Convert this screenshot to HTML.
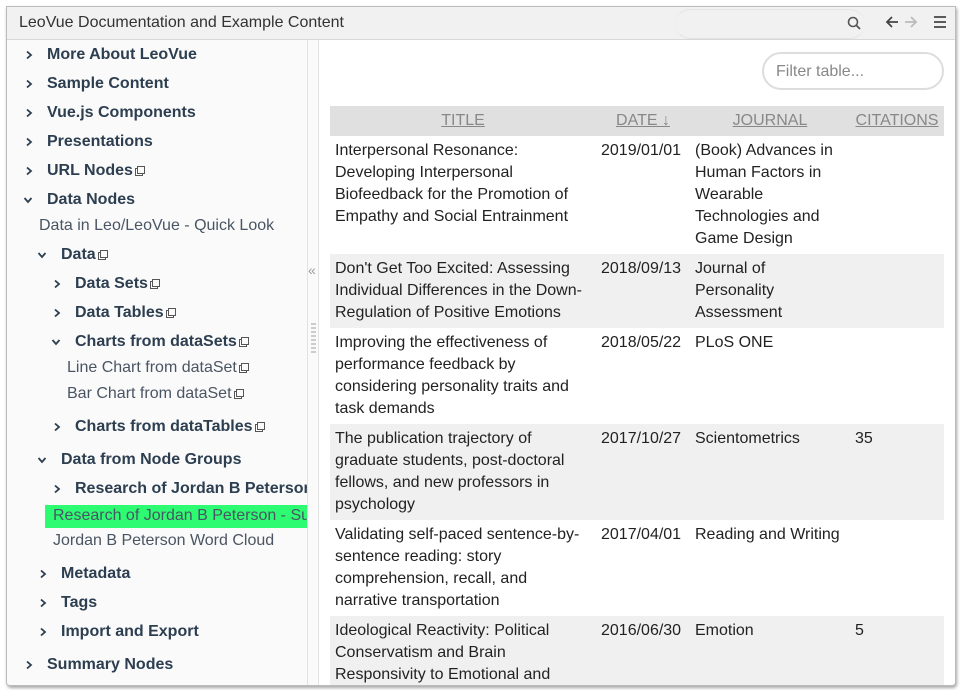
<!DOCTYPE html>
<html><head><meta charset="utf-8"><style>
*{box-sizing:border-box;margin:0;padding:0}
body{width:961px;height:690px;background:#fff;font-family:"Liberation Sans",sans-serif;color:#2c3e50;position:relative;overflow:hidden}
.win{position:absolute;left:6px;top:6px;width:950px;height:680px;border:1px solid #bbb;box-shadow:1px 2px 3px rgba(0,0,0,.35);border-radius:0 0 4px 4px;overflow:hidden;background:#fff}
.top{position:absolute;left:0;top:0;width:100%;height:33px;background:#f1f1f1;border-bottom:1px solid #d8d8d8}
.top .t{position:absolute;left:12px;top:7px;font-size:16px;color:#333}
.srch{position:absolute;left:668px;top:2px;width:190px;height:30px;border:1px solid #e4e4e4;border-radius:15px;border-right:none;border-left:1px solid #eee}
.side{position:absolute;left:0;top:33px;width:300px;height:647px;background:#fafafa}
.sep{position:absolute;left:300px;top:33px;width:12px;height:647px;border-left:1px solid #e2e2e2;border-right:1px solid #e2e2e2;background:#fafafa}
.n{position:absolute;font-size:16px;white-space:nowrap;color:#2c3e50}
.b{font-weight:bold}
.l{color:#4a5563}
.cr,.cd{position:absolute}
.ic{display:inline-block;width:8px;height:8px;border:1px solid #555;margin-left:4px;position:relative;top:-1px;box-shadow:-2px 2px 0 -1px #fff,-2px 2px 0 0 #555}
.main{position:absolute;left:312px;top:33px;width:638px;height:647px;background:#fff}
.filter{position:absolute;left:443px;top:12px;width:182px;height:38px;border:2px solid #ddd;border-radius:19px;font-size:16px;color:#888;padding:9px 12px}
table{position:absolute;left:11px;top:66px;width:614px;border-collapse:collapse;font-size:16px;color:#222}
th{background:#e0e0e0;color:#888;font-weight:normal;text-decoration:underline;height:30px;text-align:center;font-size:16px}
td{vertical-align:top;padding:4px 6px 4px 5px;line-height:22px}
tr.g td{background:#f0f0f0}
</style></head><body>
<svg width="0" height="0" style="position:absolute"><defs>
<symbol id="r" viewBox="0 0 8 10"><path d="M2 1.5L6 5L2 8.5" stroke="#2c3e50" stroke-width="1.8" fill="none"/></symbol>
<symbol id="d" viewBox="0 0 10 8"><path d="M1.5 2L5 6L8.5 2" stroke="#2c3e50" stroke-width="1.8" fill="none"/></symbol>
</defs></svg>
<div class="win">
<div class="top"><span class="t">LeoVue Documentation and Example Content</span><div class="srch"></div>
<svg style="position:absolute;left:840px;top:9px" width="14" height="14"><circle cx="6" cy="6" r="4.5" stroke="#555" stroke-width="1.6" fill="none"/><line x1="9.5" y1="9.5" x2="13" y2="13" stroke="#555" stroke-width="1.8"/></svg>
<svg style="position:absolute;left:878px;top:8px" width="40" height="16"><path d="M2 7H13M7 2L2 7L7 12" stroke="#444" stroke-width="1.8" fill="none"/><path d="M20 7H31M26 2L31 7L26 12" stroke="#bbb" stroke-width="1.8" fill="none"/></svg>
<svg style="position:absolute;left:926px;top:8px" width="14" height="14"><path d="M1 2H13M1 7H13M1 12H13" stroke="#444" stroke-width="1.8"/></svg>
</div>
<div class="side">
<svg class="cr" style="left:18px;top:10px" width="8" height="10"><use href="#r"/></svg><span class="n b" style="left:40px;top:6px">More About LeoVue</span>
<svg class="cr" style="left:18px;top:39px" width="8" height="10"><use href="#r"/></svg><span class="n b" style="left:40px;top:35px">Sample Content</span>
<svg class="cr" style="left:18px;top:68px" width="8" height="10"><use href="#r"/></svg><span class="n b" style="left:40px;top:64px">Vue.js Components</span>
<svg class="cr" style="left:18px;top:97px" width="8" height="10"><use href="#r"/></svg><span class="n b" style="left:40px;top:93px">Presentations</span>
<svg class="cr" style="left:18px;top:126px" width="8" height="10"><use href="#r"/></svg><span class="n b" style="left:40px;top:122px">URL Nodes<i class="ic"></i></span>
<svg class="cd" style="left:16px;top:156px" width="10" height="8"><use href="#d"/></svg><span class="n b" style="left:40px;top:151px">Data Nodes</span>
<span class="n l" style="left:32px;top:177px">Data in Leo/LeoVue - Quick Look</span>
<svg class="cd" style="left:30px;top:211px" width="10" height="8"><use href="#d"/></svg><span class="n b" style="left:54px;top:206px">Data<i class="ic"></i></span>
<svg class="cr" style="left:46px;top:239px" width="8" height="10"><use href="#r"/></svg><span class="n b" style="left:68px;top:235px">Data Sets<i class="ic"></i></span>
<svg class="cr" style="left:46px;top:268px" width="8" height="10"><use href="#r"/></svg><span class="n b" style="left:68px;top:264px">Data Tables<i class="ic"></i></span>
<svg class="cd" style="left:44px;top:298px" width="10" height="8"><use href="#d"/></svg><span class="n b" style="left:68px;top:293px">Charts from dataSets<i class="ic"></i></span>
<span class="n l" style="left:60px;top:319px">Line Chart from dataSet<i class="ic"></i></span>
<span class="n l" style="left:60px;top:345px">Bar Chart from dataSet<i class="ic"></i></span>
<svg class="cr" style="left:46px;top:382px" width="8" height="10"><use href="#r"/></svg><span class="n b" style="left:68px;top:378px">Charts from dataTables<i class="ic"></i></span>
<svg class="cd" style="left:30px;top:416px" width="10" height="8"><use href="#d"/></svg><span class="n b" style="left:54px;top:411px">Data from Node Groups</span>
<svg class="cr" style="left:46px;top:444px" width="8" height="10"><use href="#r"/></svg><span class="n b" style="left:68px;top:440px">Research of Jordan B Peterson</span>
<div style="position:absolute;left:38px;top:465px;width:262px;height:23px;background:#2dfc72;overflow:hidden"><span class="n l" style="left:8px;top:2px">Research of Jordan B Peterson - Summary</span></div>
<span class="n l" style="left:46px;top:492px">Jordan B Peterson Word Cloud</span>
<svg class="cr" style="left:32px;top:529px" width="8" height="10"><use href="#r"/></svg><span class="n b" style="left:54px;top:525px">Metadata</span>
<svg class="cr" style="left:32px;top:558px" width="8" height="10"><use href="#r"/></svg><span class="n b" style="left:54px;top:554px">Tags</span>
<svg class="cr" style="left:32px;top:587px" width="8" height="10"><use href="#r"/></svg><span class="n b" style="left:54px;top:583px">Import and Export</span>
<svg class="cr" style="left:18px;top:620px" width="8" height="10"><use href="#r"/></svg><span class="n b" style="left:40px;top:616px">Summary Nodes</span>
</div>
<div class="sep"><span style="position:absolute;left:0;top:222px;font-size:14px;color:#999">«</span>
<div style="position:absolute;left:3px;top:283px;width:5px;height:30px;background:repeating-linear-gradient(#ccc 0 2px,transparent 2px 4px)"></div></div>
<div class="main">
<div class="filter">Filter table...</div>
<table>
<tr><th style="width:266px">TITLE</th><th style="width:94px">DATE ↓</th><th style="width:160px">JOURNAL</th><th>CITATIONS</th></tr>
<tr><td>Interpersonal Resonance: Developing Interpersonal Biofeedback for the Promotion of Empathy and Social Entrainment</td><td>2019/01/01</td><td>(Book) Advances in Human Factors in Wearable Technologies and Game Design</td><td></td></tr>
<tr class="g"><td>Don't Get Too Excited: Assessing Individual Differences in the Down-Regulation of Positive Emotions</td><td>2018/09/13</td><td>Journal of Personality Assessment</td><td></td></tr>
<tr><td>Improving the effectiveness of performance feedback by considering personality traits and task demands</td><td>2018/05/22</td><td>PLoS ONE</td><td></td></tr>
<tr class="g"><td>The publication trajectory of graduate students, post-doctoral fellows, and new professors in psychology</td><td>2017/10/27</td><td>Scientometrics</td><td>35</td></tr>
<tr><td>Validating self-paced sentence-by-sentence reading: story comprehension, recall, and narrative transportation</td><td>2017/04/01</td><td>Reading and Writing</td><td></td></tr>
<tr class="g"><td>Ideological Reactivity: Political Conservatism and Brain Responsivity to Emotional and Neutral Stimuli</td><td>2016/06/30</td><td>Emotion</td><td>5</td></tr>
</table>
</div>
</div>
</body></html>
